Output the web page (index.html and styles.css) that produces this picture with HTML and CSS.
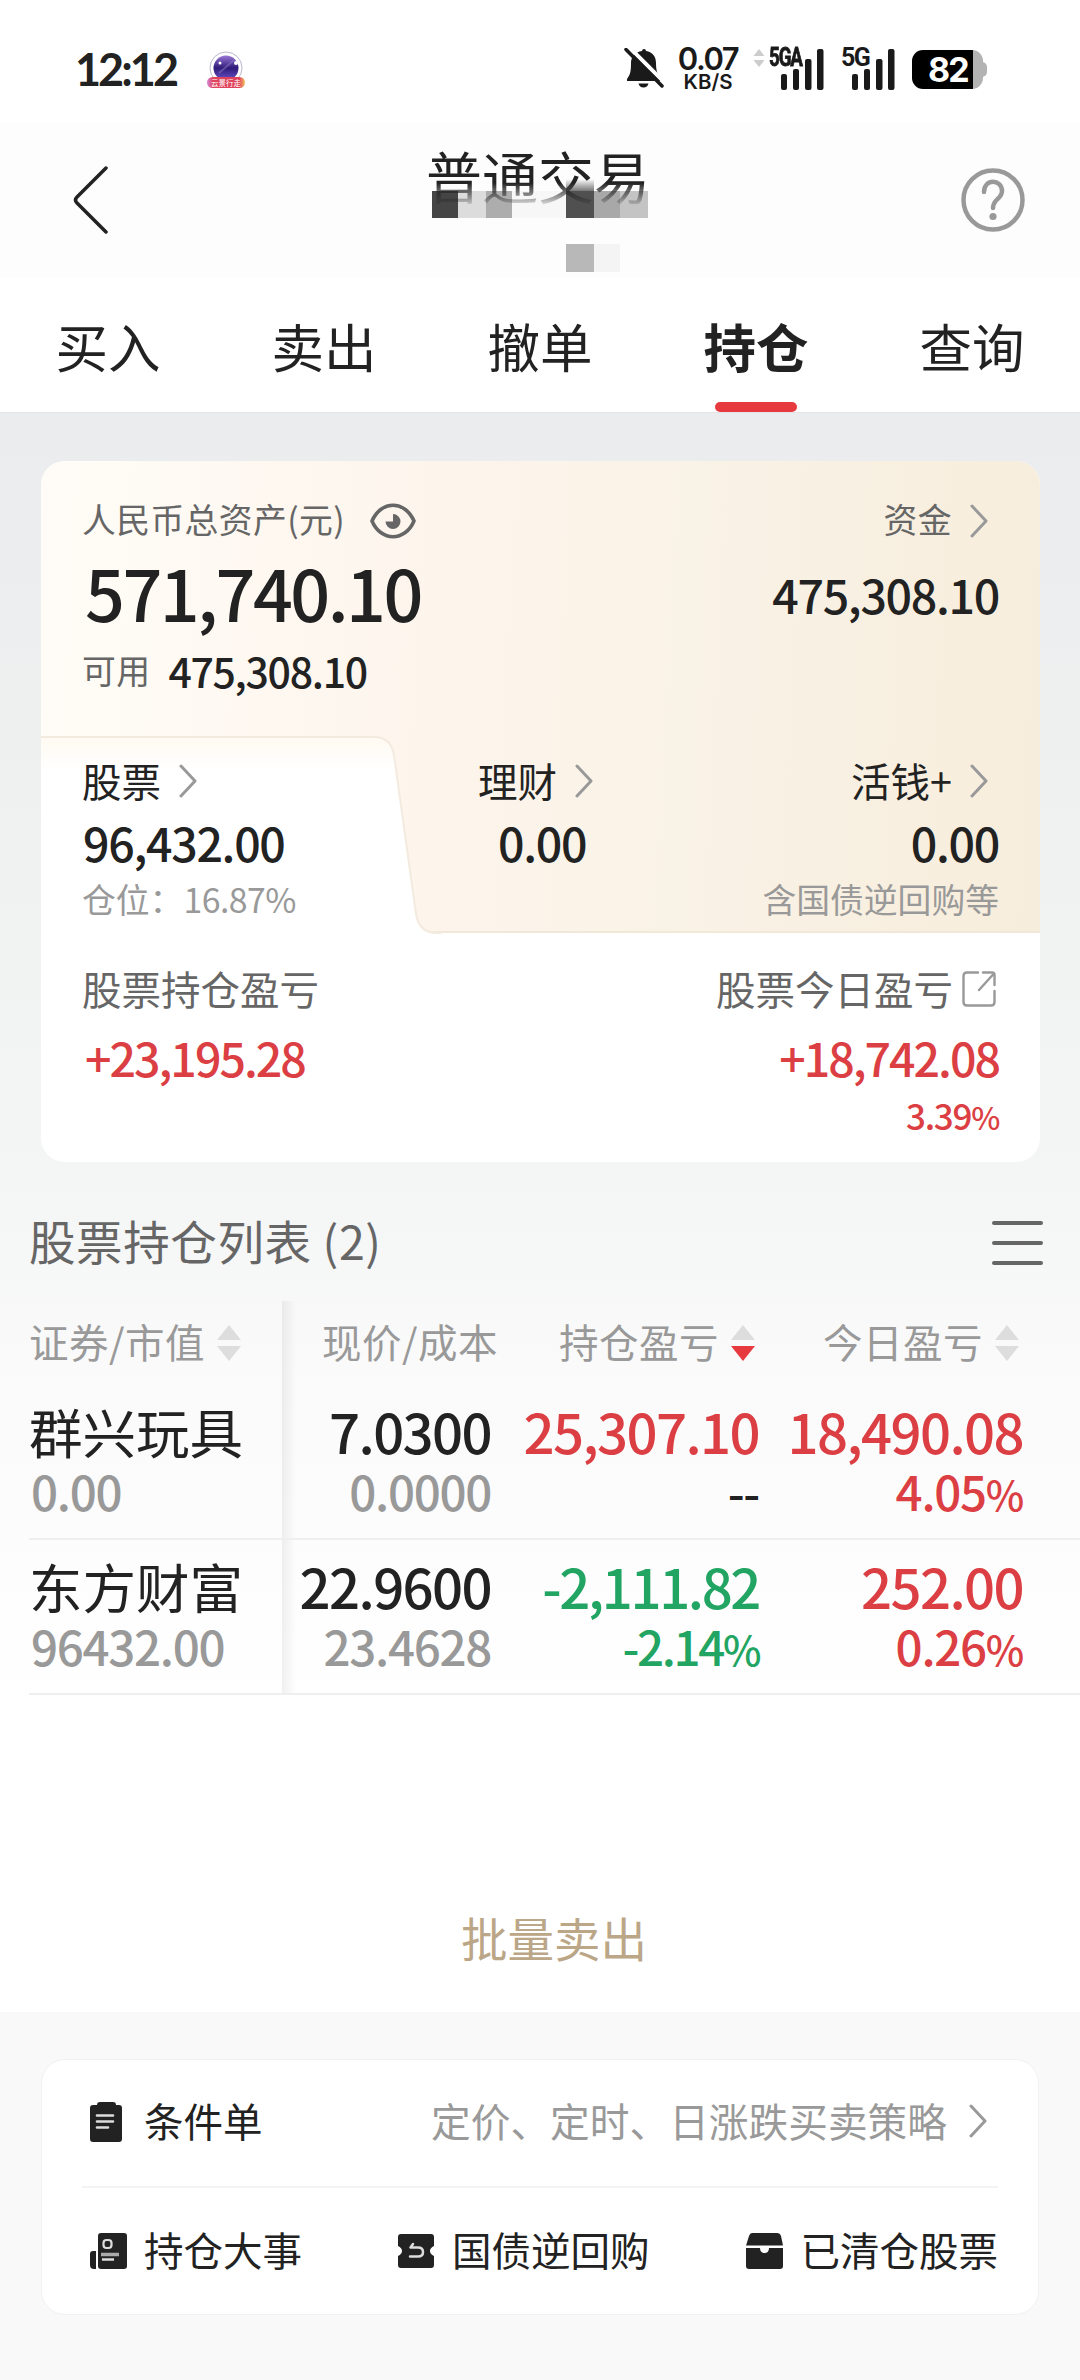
FILE: index.html
```html
<!DOCTYPE html>
<html lang="zh-CN">
<head>
    <meta charset="UTF-8">
    <meta name="viewport" content="width=device-width, initial-scale=1.0">
    <title>普通交易</title>
    <link rel="stylesheet" href="styles.css">
</head>

<body>
<!-- shared icons -->
<svg width="0" height="0" class="defs">
    <symbol id="chevron" viewBox="0 0 18 34">
        <path d="M2 2 L16 17 L2 32" fill="none" stroke="currentColor" stroke-width="3" stroke-linecap="round" stroke-linejoin="round"/>
    </symbol>
    <symbol id="signal" viewBox="0 0 44 42">
        <rect x="0" y="25" width="6" height="16" rx="2"/>
        <rect x="12" y="20" width="6" height="21" rx="2"/>
        <rect x="24" y="10" width="6.500" height="31" rx="2"/>
        <rect x="36" y="0" width="6.500" height="41" rx="2"/>
    </symbol>
</svg>

<div class="status-bar">
    <div class="time">12:12</div>
    <svg class="app-icon" width="40" height="44" viewBox="0 0 40 44">
        <defs>
            <linearGradient id="ball" x1="0" y1="0" x2="0" y2="1">
                <stop offset="0" stop-color="#9a78d8"/>
                <stop offset=".5" stop-color="#2f1a78"/>
                <stop offset="1" stop-color="#6a55d0"/>
            </linearGradient>
            <linearGradient id="ribbon">
                <stop offset="0" stop-color="#d38be0"/>
                <stop offset=".15" stop-color="#e0435c"/>
                <stop offset=".85" stop-color="#e0435c"/>
                <stop offset="1" stop-color="#f6c45c"/>
            </linearGradient>
        </defs>
        <circle cx="20" cy="21" r="16" fill="#fff" stroke="#b9b6cc" stroke-width="1"/>
        <circle cx="20" cy="21" r="12.500" fill="url(#ball)"/>
        <path d="M13 26 L28 13" stroke="#8b7bc4" stroke-width="2" opacity=".5"/>
        <circle cx="14" cy="16" r="1.500" fill="#fff"/>
        <circle cx="30" cy="16" r="2" fill="#fff"/>
        <rect x="1" y="30" width="38" height="11" rx="5.500" fill="url(#ribbon)"/>
        <text x="20" y="38.500" class="ribbon-text">云景行走</text>
    </svg>
    <div class="status-right">
        <svg class="bell" width="40" height="42" viewBox="0 0 40 42">
            <path d="M20 1 a2 2 0 0 1 2 2 C29 4 32 9 32 15 C32 24 34 27 37 31 L37 33 H3 L3 31 C6 27 7 24 7 15 C7 9 11 4 18 3 a2 2 0 0 1 2-2z" fill="#1a1a1a"/>
            <path d="M14.500 35.500 h10 q-1 4 -5 4 t-5-4z" fill="#1a1a1a"/>
            <path d="M4 -2 L42 36" stroke="#fff" stroke-width="4"/>
            <path d="M2 1.500 L38 38" stroke="#1a1a1a" stroke-width="3.500" stroke-linecap="round"/>
        </svg>
        <div class="speed"><b>0.07</b><span>KB/S</span></div>
        <svg class="updown" width="12" height="18" viewBox="0 0 12 18">
            <path d="M6 0 L11.500 7 H.5z M6 18 L.5 11 H11.500z" fill="#ccc"/>
        </svg>
        <div class="net net-5ga"><span>5GA</span><svg width="44" height="42"><use href="#signal"/></svg></div>
        <div class="net"><span>5G</span><svg width="44" height="42"><use href="#signal"/></svg></div>
        <div class="battery"><span>82</span></div>
    </div>
</div>

<div class="header">
    <svg class="back" width="36" height="68" viewBox="0 0 36 68">
        <path d="M33 2 L4 31 Q1 34 4 37 L33 66" fill="none" stroke="#222" stroke-width="3.500" stroke-linecap="round"/>
    </svg>
    <div class="title-box">
        <svg class="mosaic" width="216" height="98" viewBox="0 0 216 98">
            <defs>
                <linearGradient id="up" x1="0" y1="0" x2="0" y2="1">
                    <stop offset="0" stop-color="#555" stop-opacity="0"/>
                    <stop offset="1" stop-color="#555" stop-opacity=".8"/>
                </linearGradient>
            </defs>
            <rect x="0" y="17" width="26" height="27" fill="#454545"/>
            <rect x="26" y="17" width="28" height="27" fill="#dcdcdc"/>
            <rect x="54" y="17" width="26" height="27" fill="#adadad"/>
            <rect x="80" y="17" width="54" height="27" fill="#f7f7f7"/>
            <rect x="134" y="17" width="28" height="27" fill="#505050"/>
            <rect x="162" y="17" width="26" height="27" fill="#a8a8a8"/>
            <rect x="188" y="17" width="28" height="27" fill="#c4c4c4"/>
            <rect x="134" y="5" width="28" height="12" fill="url(#up)"/>
            <rect x="134" y="70" width="28" height="28" fill="#b8b8b8"/>
            <rect x="162" y="70" width="26" height="28" fill="#f4f4f4"/>
        </svg>
        <h1>普通交易</h1>
    </div>
    <svg class="help" width="66" height="66" viewBox="0 0 66 66">
        <circle cx="33" cy="33" r="29.500" fill="none" stroke="#999" stroke-width="4.500"/>
        <path d="M24 25 C24 11 42 12 42 24 C42 32 33 32 33 41" fill="none" stroke="#999" stroke-width="4.500" stroke-linecap="round"/>
        <circle cx="33" cy="49.500" r="3.600" fill="#999"/>
    </svg>
</div>

<div class="tabs">
    <div class="tab">买入</div>
    <div class="tab">卖出</div>
    <div class="tab">撤单</div>
    <div class="tab active">持仓</div>
    <div class="tab">查询</div>
</div>

<div class="main">
    <div class="asset-card">
        <div class="asset-top">
            <div class="total">
                <div class="row label-row">
                    <span class="label">人民币总资产(元)
                        <svg class="eye" width="46" height="36" viewBox="0 0 46 36">
                            <path d="M2 18 C11 -3 35 -3 44 18 C35 39 11 39 2 18z" fill="none" stroke="#666" stroke-width="3.600" stroke-linejoin="round"/>
                            <path d="M23 11 a7.500 7.500 0 1 1 -7.500 7.500 L23 18.500z" fill="#666"/>
                        </svg>
                    </span>
                    <span class="label">资金<svg class="chev" width="18" height="34"><use href="#chevron"/></svg></span>
                </div>
                <div class="row total-row">
                    <span class="num-big">571,740.10</span>
                    <span class="num">475,308.10</span>
                </div>
                <div class="avail-row"><span class="label">可用</span><span class="num-mid">475,308.10</span></div>
            </div>
            <div class="accounts">
                <svg class="tab-shape" width="400" height="200" viewBox="0 0 400 200">
                    <defs>
                        <linearGradient id="tabfade" x1="0" y1="0" x2="0" y2="1">
                            <stop offset="0" stop-color="#fffaf2"/>
                            <stop offset=".18" stop-color="#fff"/>
                        </linearGradient>
                    </defs>
                    <path d="M0 1 H333 Q350 1 353 19 L375 178 Q378 198 396 198 H400 V200 H0z" fill="url(#tabfade)"/>
                    <path d="M0 1 H333 Q350 1 353 19 L375 178 Q378 197 396 197 H400" fill="none" stroke="#f3ebdf" stroke-width="2"/>
                </svg>
                <div class="account">
                    <div class="name">股票<svg class="chev" width="18" height="34"><use href="#chevron"/></svg></div>
                    <div class="num">96,432.00</div>
                    <div class="note">仓位：<span class="pct">16.87%</span></div>
                </div>
                <div class="account mid">
                    <div class="name">理财<svg class="chev" width="18" height="34"><use href="#chevron"/></svg></div>
                    <div class="num">0.00</div>
                </div>
                <div class="account end">
                    <div class="name">活钱+<svg class="chev" width="18" height="34"><use href="#chevron"/></svg></div>
                    <div class="num">0.00</div>
                    <div class="note">含国债逆回购等</div>
                </div>
            </div>
        </div>
        <div class="profit">
            <div>
                <div class="profit-label">股票持仓盈亏</div>
                <div class="num red">+23,195.28</div>
            </div>
            <div class="end">
                <div class="profit-label">股票今日盈亏<svg class="link" width="34" height="36" viewBox="0 0 34 36">
                    <path d="M16 1.500 H5 Q1.500 1.500 1.500 5 V31 Q1.500 34.500 5 34.500 H29 Q32.500 34.500 32.500 31 V20 M21 1.500 H30 Q32.500 1.500 32.500 4 V14 M31.500 3 L17 19" fill="none" stroke="#999" stroke-width="2.400" stroke-linecap="round"/>
                </svg></div>
                <div class="num red">+18,742.08</div>
                <div class="rate red">3.39<span class="sign">%</span></div>
            </div>
        </div>
    </div>

    <div class="list-title">
        <h2>股票持仓列表 (2)</h2>
        <div class="menu"><i></i><i></i><i></i></div>
    </div>

    <div class="table">
        <div class="tr th">
            <div class="td first">证券/市值<svg class="sort" width="24" height="36" viewBox="0 0 24 36"><path class="up" d="M12 0 L24 15 H0z"/><path class="down" d="M12 36 L24 21 H0z"/></svg></div>
            <div class="td price-head">现价/成本</div>
            <div class="td">持仓盈亏<svg class="sort desc" width="24" height="36" viewBox="0 0 24 36"><path class="up" d="M12 0 L24 15 H0z"/><path class="down" d="M12 36 L24 21 H0z"/></svg></div>
            <div class="td">今日盈亏<svg class="sort" width="24" height="36" viewBox="0 0 24 36"><path class="up" d="M12 0 L24 15 H0z"/><path class="down" d="M12 36 L24 21 H0z"/></svg></div>
        </div>
        <div class="tr">
            <div class="td first"><div class="stock">群兴玩具</div><div class="sub gray">0.00</div></div>
            <div class="td"><div class="val">7.0300</div><div class="sub gray">0.0000</div></div>
            <div class="td"><div class="val red">25,307.10</div><div class="sub">--</div></div>
            <div class="td"><div class="val red">18,490.08</div><div class="sub red">4.05<span class="sign">%</span></div></div>
        </div>
        <div class="tr">
            <div class="td first"><div class="stock">东方财富</div><div class="sub gray">96432.00</div></div>
            <div class="td"><div class="val">22.9600</div><div class="sub gray">23.4628</div></div>
            <div class="td"><div class="val green tight">-2,111.82</div><div class="sub green tight">-2.14<span class="sign">%</span></div></div>
            <div class="td"><div class="val red">252.00</div><div class="sub red">0.26<span class="sign">%</span></div></div>
        </div>
    </div>

    <div class="batch">批量卖出</div>
</div>

<div class="footer">
    <div class="tools">
        <div class="tool-row">
            <div class="tool">
                <svg width="38" height="40" viewBox="0 0 38 40">
                    <path d="M8 3 Q8 0 11 0 H24 Q27 0 27 3 H30 Q33 3 33 6 V37 Q33 40 30 40 H4 Q1 40 1 37 V6 Q1 3 4 3z" fill="#222"/>
                    <path d="M8 13.500 H24 M8 19.500 H24 M8 25.500 H19" stroke="#ddd" stroke-width="2.600" stroke-linecap="round"/>
                </svg>条件单
            </div>
            <div class="tip">定价、定时、日涨跌买卖策略<svg class="chev" width="18" height="34"><use href="#chevron"/></svg></div>
        </div>
        <div class="tool-row">
            <div class="tool">
                <svg width="38" height="38" viewBox="0 0 38 38">
                    <rect x="9" y="1" width="29" height="36" rx="3" fill="#222"/>
                    <path d="M7 19 V37 H5 Q1 37 1 33 V22 Q1 19 4 19z" fill="#222"/>
                    <rect x="14.500" y="8" width="8" height="8" rx="3" fill="none" stroke="#ddd" stroke-width="2.200"/>
                    <path d="M12 22.500 H30" stroke="#aaa" stroke-width="3.500"/>
                    <path d="M13 27.500 H25" stroke="#ddd" stroke-width="2.500"/>
                </svg>持仓大事
            </div>
            <div class="tool">
                <svg width="38" height="38" viewBox="0 0 38 38">
                    <path d="M4 2 H34 Q37 2 37 5 V14 Q33 16 33 19 T37 24 V33 Q37 36 34 36 H4 Q1 36 1 33 V24 Q5 22 5 19 T1 14 V5 Q1 2 4 2z" fill="#222"/>
                    <path d="M16 12 L13.500 15.500 H21 Q26 15.500 26 20 T21 24.500 H13" fill="none" stroke="#ddd" stroke-width="2.500" stroke-linecap="round" stroke-linejoin="round"/>
                </svg>国债逆回购
            </div>
            <div class="tool">
                <svg width="39" height="38" viewBox="0 0 39 38">
                    <path d="M7 1 H32 Q35 1 36 4 L38 13.500 H1 L4 4 Q5 1 7 1z" fill="#222"/>
                    <path d="M1 16 H15 Q15 21 19.500 21 T24 16 H38 V34 Q38 37 35 37 H4 Q1 37 1 34z" fill="#222"/>
                </svg>已清仓股票
            </div>
        </div>
    </div>
</div>
</body>
</html>
```
FILE: styles.css
```css
* {
    box-sizing: border-box;
}

body {
    font-family: "Noto Sans CJK SC", "Noto Sans", sans-serif;
    background-color: #fff;
    margin: 0;
    color: #222;
    width: 1080px;
    height: 2380px;
    overflow: hidden;
}

svg {
    display: block;
    flex: none;
}

.defs {
    position: absolute;
}

/* status bar */
.status-bar {
    height: 123px;
    display: flex;
    align-items: flex-start;
    padding: 47px 97px 0 75px;
}

.time {
    font-family: Lato, "Liberation Sans", sans-serif;
    font-weight: 700;
    font-size: 45px;
    line-height: 44px;
    width: 131px;
    letter-spacing: -3px;
    white-space: nowrap;
}

.ribbon-text {
    font-size: 7.500px;
    fill: #fff;
    text-anchor: middle;
}

.status-right {
    margin-left: auto;
    display: flex;
    align-items: flex-start;
    font-family: Inter, "Liberation Sans", sans-serif;
    font-weight: 700;
    color: #1a1a1a;
}

.bell {
    margin-top: 1px;
}

.speed {
    width: 70px;
    margin-left: 9px;
    text-align: center;
    line-height: 24px;
}

.speed b {
    display: block;
    font-size: 31px;
    font-weight: 600;
    letter-spacing: -1.500px;
}

.speed span {
    display: block;
    font-size: 20.500px;
    line-height: 22px;
    font-weight: 600;
}

.updown {
    margin: 2px 0 0 10px;
}

.net {
    display: grid;
    margin: 2px 0 0 16px;
    width: 55px;
}

.net span {
    grid-area: 1 / 1;
    font-family: Roboto, sans-serif;
    font-size: 25px;
    line-height: 18px;
    letter-spacing: -1.500px;
    transform-origin: 0 0;
}

.net svg {
    grid-area: 1 / 1;
    justify-self: end;
    fill: #1a1a1a;
}

.net-5ga {
    margin-left: 4px;
    width: 56px;
}

.net-5ga span {
    transform: scaleX(0.75);
    -webkit-text-stroke: 0.8px #1a1a1a;
}

.battery {
    position: relative;
    width: 71px;
    height: 39px;
    margin: 3px 0 0 16px;
    border-radius: 11px;
    background: linear-gradient(90deg, #000 61px, #b3b3b3 61px);
    color: #fff;
    font-size: 34px;
    line-height: 39px;
    padding-left: 16px;
    letter-spacing: -2px;
}

.battery::after {
    content: "";
    position: absolute;
    left: 70px;
    top: 12px;
    width: 5px;
    height: 15px;
    border-radius: 0 5px 5px 0;
    background-color: #b3b3b3;
}

/* header */
.header {
    height: 155px;
    background-color: #fdfdfd;
    display: flex;
    justify-content: space-between;
    align-items: center;
    padding: 0 54px 2px 73px;
}

.title-box {
    position: relative;
    width: 224px;
    height: 153px;
    margin-left: 7px;
}

.title-box h1 {
    position: relative;
    margin: 20px 0 0;
    font-size: 56px;
    font-weight: 400;
    line-height: 64px;
    white-space: nowrap;
    -webkit-mask-image: linear-gradient(#000 40px, transparent 65px);
    mask-image: linear-gradient(#000 40px, transparent 65px);
}

.mosaic {
    position: absolute;
    left: 6px;
    top: 51px;
}

/* tabs */
.tabs {
    height: 135px;
    display: grid;
    grid-template-columns: repeat(5, 216px);
    border-bottom: 1px solid #e3e4e6;
}

.tab {
    position: relative;
    padding-top: 32px;
    font-size: 52.500px;
    line-height: 70px;
    text-align: center;
}

.tab.active {
    font-weight: 700;
}

.tab.active::after {
    content: "";
    position: absolute;
    left: 67px;
    bottom: 0;
    width: 82px;
    height: 10px;
    border-radius: 5px;
    background-color: #e63a3f;
}

/* assets */
.main {
    height: 1599px;
    padding-top: 48px;
    background: linear-gradient(#ebecee 0, #eeefef 300px, #f4f5f5 770px, #fafafa 950px, #fff 1300px);
}

.asset-card {
    width: 999px;
    height: 701px;
    margin-left: 41px;
    border-radius: 24px;
    background-color: #fff;
    overflow: hidden;
}

.asset-top {
    height: 472px;
    background: linear-gradient(93deg, #fffcf7 0, #fdf5ec 40%, #f9f2e6 65%, #f7eddc 100%);
}

.total {
    height: 275px;
    padding: 37px 41px 0;
}

.row {
    display: flex;
    justify-content: space-between;
    align-items: center;
}

.label {
    display: flex;
    align-items: center;
    font-size: 33.800px;
    line-height: 40px;
    letter-spacing: 0.4px;
    color: #666;
}

.eye {
    margin: 5px 0 0 25px;
}

.chev {
    color: #999;
    margin: 4px 11px 0 18px;
}

.total-row {
    height: 66px;
    margin-top: 20px;
}

.total-row .num {
    padding-top: 4px;
}

.num-big,
.num,
.num-mid,
.rate,
.val,
.sub {
    font-weight: 500;
    white-space: nowrap;
    letter-spacing: -1.300px;
}

.num-big {
    font-size: 70px;
    line-height: 70px;
    margin-left: 3px;
    letter-spacing: -2.500px;
}

.num {
    font-size: 46.500px;
    line-height: 50px;
}

.avail-row {
    display: flex;
    align-items: center;
    height: 44px;
    margin-top: 23px;
}

.num-mid {
    font-size: 41px;
    line-height: 44px;
    margin-left: 18px;
}

.accounts {
    position: relative;
    height: 197px;
    display: grid;
    grid-template-columns: 396px 1fr 1fr;
    padding: 21px 41px 0;
    border-bottom: 2px solid #f1e8d9;
}

.tab-shape {
    position: absolute;
    left: 0;
    top: 0;
}

.account {
    position: relative;
}

.name {
    display: flex;
    align-items: center;
    height: 44px;
    font-size: 39.500px;
}

.account .num {
    margin-top: 16px;
    padding-left: 1px;
}

.account.mid .num {
    padding-left: 20px;
}

.note {
    margin-top: 12px;
    font-size: 33.800px;
    line-height: 40px;
    color: #999;
    white-space: nowrap;
}

.pct {
    letter-spacing: -0.5px;
}

.end {
    display: flex;
    flex-direction: column;
    align-items: flex-end;
}

.profit {
    display: flex;
    justify-content: space-between;
    padding: 32px 41px 0;
}

.profit-label {
    display: flex;
    align-items: center;
    height: 44px;
    font-size: 39.500px;
    color: #666;
}

.link {
    margin: 4px 3px 0 9px;
}

.profit .num {
    margin-top: 23px;
    padding-left: 3px;
    letter-spacing: -2px;
}

.rate {
    margin-top: 13px;
    font-size: 35px;
    line-height: 40px;
}

.rate .sign {
    font-size: 31px;
}

.red {
    color: #dc3f43;
}

.green {
    color: #22a562;
}

.gray {
    color: #999;
}

/* holdings list */
.list-title {
    display: flex;
    justify-content: space-between;
    align-items: center;
    height: 56px;
    margin-top: 50px;
    padding: 0 37px 0 29px;
}

.list-title h2 {
    margin: 0;
    font-size: 46.500px;
    font-weight: 400;
    line-height: 56px;
    letter-spacing: 0.6px;
    color: #666;
}

.menu {
    display: flex;
    flex-direction: column;
    gap: 16px;
    padding-top: 6px;
}

.menu i {
    width: 51px;
    height: 4px;
    border-radius: 2px;
    background-color: #666;
}

.table {
    margin-top: 33px;
}

.tr {
    display: grid;
    grid-template-columns: 282px 209px 268px 264px;
    height: 155px;
    position: relative;
    text-align: right;
}

.tr:not(.th)::after {
    content: "";
    position: absolute;
    left: 29px;
    right: 0;
    bottom: 0;
    height: 2px;
    background-color: #efefef;
}

.th {
    height: 84px;
    font-size: 39.500px;
    letter-spacing: 0.5px;
    color: #999;
}

.td {
    padding-top: 16px;
}

.th .td {
    display: flex;
    align-items: center;
    justify-content: flex-end;
    padding: 0 4px 6px 0;
    white-space: nowrap;
}

.th .price-head {
    padding-right: 0;
    margin-right: -7px;
}

.td.first {
    position: relative;
    padding-left: 29px;
    text-align: left;
    justify-content: flex-start;
}

.td.first::after {
    content: "";
    position: absolute;
    left: 100%;
    top: 0;
    width: 14px;
    height: 100%;
    background: linear-gradient(90deg, rgba(0, 0, 0, 0.06), rgba(0, 0, 0, 0));
}

.sort {
    margin: 6px 0 0 12px;
    fill: #ddd;
}

.sort.desc .down {
    fill: #e63a3f;
}

.stock {
    font-size: 53.500px;
    line-height: 60px;
}

.val {
    font-size: 54.500px;
    line-height: 60px;
    letter-spacing: -1.600px;
}

.sub {
    margin-top: 6px;
    font-size: 47.500px;
    line-height: 48px;
}

.tight {
    letter-spacing: -2.400px;
}

.first .sub {
    padding-left: 2px;
}

.sign {
    font-size: 41px;
}

.batch {
    padding-top: 212px;
    font-size: 46.500px;
    line-height: 60px;
    text-align: center;
    padding-left: 28px;
    color: #bba687;
}

/* bottom tools */
.footer {
    height: 368px;
    padding: 47px 41px 0;
    background-color: #f9f9f9;
}

.tools {
    height: 256px;
    padding: 0 40px;
    border: 1px solid #f1f1f1;
    border-radius: 24px;
    background-color: #fff;
}

.tool-row {
    display: flex;
    justify-content: space-between;
    align-items: center;
    height: 126px;
    padding: 0 0 8px 7px;
    font-size: 39.500px;
}

.tool-row + .tool-row {
    border-top: 2px solid #f3f3f3;
    padding-bottom: 4px;
}

.tool {
    display: flex;
    align-items: center;
}

.tool svg {
    margin: 5px 17px 0 0;
}

.tip {
    display: flex;
    align-items: center;
    font-size: 39.700px;
    color: #999;
}

.tip .chev {
    margin-left: 22px;
}
```
